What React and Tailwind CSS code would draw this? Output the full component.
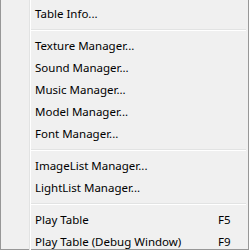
const groups = [
  [{ label: "Table Info..." }],
  [
    { label: "Texture Manager..." },
    { label: "Sound Manager..." },
    { label: "Music Manager..." },
    { label: "Model Manager..." },
    { label: "Font Manager..." },
  ],
  [{ label: "ImageList Manager..." }, { label: "LightList Manager..." }],
  [
    { label: "Play Table", shortcut: "F5" },
    { label: "Play Table (Debug Window)", shortcut: "F9" },
  ],
]

function MenuItem({ label, shortcut }) {
  return (
    <div className="flex h-[22px] items-center pl-[4px] pr-[2px] leading-[22px]">
      <span className="flex-1 whitespace-nowrap">{label}</span>
      {shortcut && <span className="w-[28px] whitespace-nowrap">{shortcut}</span>}
    </div>
  )
}

function Separator() {
  return (
    <div className="py-[4px] pr-[2px]">
      <div className="h-px bg-[#e2e3e3]" />
      <div className="h-px bg-white" />
    </div>
  )
}

export default function App() {
  return (
    <div
      className="flex h-[250px] w-[249px] flex-col border-x border-b border-[#979797] bg-[#f0f0f0] pb-[2px] text-[11.5px] text-black"
      style={{ fontFamily: '"Noto Sans", "Open Sans", sans-serif' }}
    >
      <div className="flex flex-1">
        <div className="w-[29px] border-r border-[#e2e3e3]" />
        <div className="flex-1 border-l border-white pt-[3px]">
          {groups.map((items, i) => (
            <div key={i}>
              {i > 0 && <Separator />}
              {items.map((item) => (
                <MenuItem key={item.label} {...item} />
              ))}
            </div>
          ))}
        </div>
      </div>
    </div>
  )
}
